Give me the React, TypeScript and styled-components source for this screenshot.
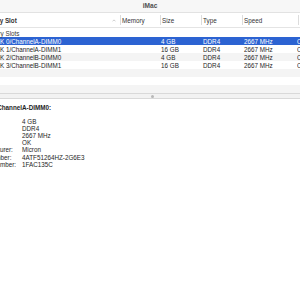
import styled, { createGlobalStyle } from 'styled-components'

const GlobalStyle = createGlobalStyle`
  html, body {
    margin: 0;
    padding: 0;
    background: #ffffff;
    overflow: hidden;
  }
  body {
    font-family: "Liberation Sans", Arial, sans-serif;
    color: #262626;
  }
`

interface SlotRow {
  name: string
  size: string
  type: string
  speed: string
  status: string
}

const slots: SlotRow[] = [
  { name: 'BANK 0/ChannelA-DIMM0', size: '4 GB', type: 'DDR4', speed: '2667 MHz', status: 'OK' },
  { name: 'BANK 1/ChannelA-DIMM1', size: '16 GB', type: 'DDR4', speed: '2667 MHz', status: 'OK' },
  { name: 'BANK 2/ChannelB-DIMM0', size: '4 GB', type: 'DDR4', speed: '2667 MHz', status: 'OK' },
  { name: 'BANK 3/ChannelB-DIMM1', size: '16 GB', type: 'DDR4', speed: '2667 MHz', status: 'OK' },
]

const details = [
  ['Size:', '4 GB'],
  ['Type:', 'DDR4'],
  ['Speed:', '2667 MHz'],
  ['Status:', 'OK'],
  ['Manufacturer:', 'Micron'],
  ['Part Number:', '4ATF51264HZ-2G6E3'],
  ['Serial Number:', '1FAC135C'],
]

// the window is wider than the frame: its left edge sits 28px off screen
const columns = '148px 40px 41px 41px 56px 1fr'

const App = () => {
  return (
    <>
      <GlobalStyle />
      <Window>
        <TitleBar>iMac</TitleBar>

        <HeaderRow>
          <HeaderCell $bold>
            Memory Slot
            <SortIcon viewBox="0 0 8 5">
              <path d="M1 4.2 L4 1.2 L7 4.2" fill="none" stroke="#9a9a9a" strokeWidth="1" />
            </SortIcon>
          </HeaderCell>
          <HeaderCell>Memory</HeaderCell>
          <HeaderCell>Size</HeaderCell>
          <HeaderCell>Type</HeaderCell>
          <HeaderCell>Speed</HeaderCell>
          <HeaderCell>Status</HeaderCell>
        </HeaderRow>

        <List>
          <Row>
            <GroupCell>Memory Slots</GroupCell>
          </Row>
          {slots.map((slot, i) => (
            <Row key={slot.name} $striped={i % 2 === 0} $selected={i === 0}>
              <NameCell>{slot.name}</NameCell>
              <Cell />
              <Cell>{slot.size}</Cell>
              <Cell $shift>{slot.type}</Cell>
              <Cell $shift>{slot.speed}</Cell>
              <Cell $back>{slot.status}</Cell>
            </Row>
          ))}
          <Row $striped />
          <Row />
          <Row $striped />
        </List>

        <Splitter>
          <Grip />
        </Splitter>

        <Detail>
          <DetailTitle>BANK 0/ChannelA-DIMM0:</DetailTitle>
          <DetailGrid>
            {details.map(([label, value]) => (
              <DetailLine key={label}>
                <Label>{label}</Label>
                <Value>{value}</Value>
              </DetailLine>
            ))}
          </DetailGrid>
        </Detail>
      </Window>
    </>
  )
}

const Window = styled.div`
  width: 356px;
  margin-left: -28px;
  height: 300px;
  font-size: 6.3px;
  background: #ffffff;
`

const TitleBar = styled.div`
  height: 13px;
  box-sizing: border-box;
  padding-bottom: 2px;
  border-bottom: 1px solid #e2e2e2;
  background: #f7f7f7;
  display: flex;
  justify-content: center;
  align-items: center;
  font-size: 6.6px;
  font-weight: bold;
  color: #505050;
`

const HeaderRow = styled.div`
  display: grid;
  grid-template-columns: ${columns};
  height: 15px;
  box-sizing: border-box;
  border-bottom: 1px solid #e4e4e4;
  align-items: center;
  background: #ffffff;
`

const HeaderCell = styled.div<{ $bold?: boolean }>`
  height: 10px;
  display: flex;
  align-items: center;
  padding-left: 1px;
  font-weight: ${(p) => (p.$bold ? 'bold' : 'normal')};
  color: #333333;
  white-space: nowrap;
  overflow: hidden;

  & + & {
    border-left: 1px solid #dcdcdc;
  }
  &:first-child {
    padding-left: 7px;
  }
`

const SortIcon = styled.svg`
  width: 4px;
  height: 3px;
  margin-left: auto;
  margin-right: 4px;
`

const List = styled.div`
  padding-top: 1px;
`

const Row = styled.div<{ $striped?: boolean; $selected?: boolean }>`
  display: grid;
  grid-template-columns: ${columns};
  height: 8px;
  align-items: center;
  white-space: nowrap;
  background: ${(p) => (p.$selected ? '#2c63d2' : p.$striped ? '#f4f4f4' : '#ffffff')};
  color: ${(p) => (p.$selected ? '#ffffff' : '#262626')};
`

const GroupCell = styled.div`
  padding-left: 9px;
  color: #3a3a3a;
`

const NameCell = styled.div`
  padding-left: 15px;
  overflow: hidden;
`

const Cell = styled.div<{ $shift?: boolean; $back?: boolean }>`
  padding-left: ${(p) => (p.$shift ? '2px' : p.$back ? '0' : '1px')};
  margin-left: ${(p) => (p.$back ? '-1px' : '0')};
  overflow: hidden;
`

const Splitter = styled.div`
  height: 6px;
  box-sizing: border-box;
  border-top: 1px solid #d9d9d9;
  border-bottom: 1px solid #d9d9d9;
  background: #f2f2f2;
  display: flex;
  justify-content: center;
  align-items: center;
  padding-left: 4px;
`

const Grip = styled.div`
  width: 3px;
  height: 3px;
  border-radius: 50%;
  background: #b8b8b8;
`

const Detail = styled.div`
  padding-top: 5px;
  line-height: 7.1px;
  color: #1e1e1e;
`

const DetailTitle = styled.div`
  font-weight: bold;
  margin-bottom: 7px;
  white-space: nowrap;
`

const DetailGrid = styled.div`
  display: flex;
  flex-direction: column;
  padding-left: 2px;
`

const DetailLine = styled.div`
  display: grid;
  grid-template-columns: 48px 1fr;
  white-space: nowrap;
`

const Label = styled.span``

const Value = styled.span``

export default App
